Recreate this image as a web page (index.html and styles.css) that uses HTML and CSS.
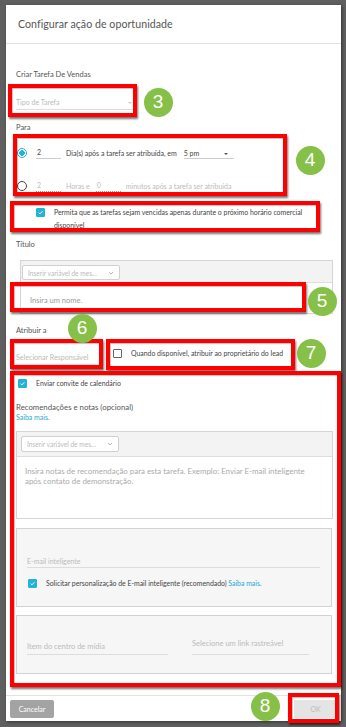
FILE: index.html
```html
<!DOCTYPE html>
<html lang="pt">
<head>
<meta charset="utf-8">
<title>Configurar ação de oportunidade</title>
<link rel="stylesheet" href="styles.css">
</head>
<body>
<div class="modal">
  <header class="modal-head"><h1 class="modal-title">Configurar ação de oportunidade</h1></header>
  <div class="modal-body">
    <div class="label l-criar">Criar Tarefa De Vendas</div>
    <div class="select s-tipo"><span class="ph">Tipo de Tarefa</span><span class="caret"></span></div>

    <div class="label l-para">Para</div>
    <div class="row row1">
      <span class="radio on"></span>
      <span class="num solid">2</span>
      <span class="txt">Dia(s) após a tarefa ser atribuída, em</span>
      <span class="select s-time"><span class="val">5 pm</span><span class="caret dark"></span></span>
    </div>
    <div class="row row2">
      <span class="radio"></span>
      <span class="num dotted">2</span>
      <span class="txt muted">Horas e</span>
      <span class="num dotted">0</span>
      <span class="txt muted">minutos após a tarefa ser atribuída</span>
    </div>
    <div class="chk-row permita">
      <span class="chk on"><svg viewBox="0 0 10 10"><path d="M2.3 5.2 4.2 7 7.8 3.2" fill="none" stroke="#fff" stroke-width="1.3"/></svg></span>
      <span class="chk-text">Permita que as tarefas sejam vencidas apenas durante o próximo horário comercial disponível</span>
    </div>

    <div class="label l-titulo">Título</div>
    <div class="rte rte-title">
      <div class="rte-bar"><span class="var-btn"><span>Inserir variável de mes...</span><svg viewBox="0 0 10 10"><path d="M2.5 3.8 5 6.3 7.5 3.8" fill="none" stroke="#999" stroke-width="0.9"/></svg></span></div>
      <div class="rte-area a-title">Insira um nome.</div>
    </div>

    <div class="label l-atrib">Atribuir a</div>
    <div class="assign">
      <div class="select s-resp"><span class="ph">Selecionar Responsável</span></div>
      <div class="chk-inline">
        <span class="chk"></span>
        <span class="chk-text">Quando disponível, atribuir ao proprietário do lead</span>
      </div>
    </div>

    <div class="chk-inline enviar">
      <span class="chk on"><svg viewBox="0 0 10 10"><path d="M2.3 5.2 4.2 7 7.8 3.2" fill="none" stroke="#fff" stroke-width="1.3"/></svg></span>
      <span class="chk-text">Enviar convite de calendário</span>
    </div>

    <div class="label l-rec">Recomendações e notas (opcional)</div>
    <a class="link saiba">Saiba mais.</a>
    <div class="rte rte-notes">
      <div class="rte-bar"><span class="var-btn"><span>Inserir variável de mes...</span><svg viewBox="0 0 10 10"><path d="M2.5 3.8 5 6.3 7.5 3.8" fill="none" stroke="#999" stroke-width="0.9"/></svg></span></div>
      <div class="rte-area a-notes">Insira notas de recomendação para esta tarefa. Exemplo: Enviar E-mail inteligente após contato de demonstração.</div>
    </div>

    <div class="panel p-email">
      <div class="line-field f-email"><span class="ph">E-mail inteligente</span></div>
      <div class="chk-inline pers">
        <span class="chk on"><svg viewBox="0 0 10 10"><path d="M2.3 5.2 4.2 7 7.8 3.2" fill="none" stroke="#fff" stroke-width="1.3"/></svg></span>
        <span class="chk-text">Solicitar personalização de E-mail inteligente (recomendado) <a class="link">Saiba mais.</a></span>
      </div>
    </div>

    <div class="panel p-media">
      <div class="line-field f-media"><span class="ph">Item do centro de mídia</span></div>
      <div class="line-field f-link"><span class="ph">Selecione um link rastreável</span></div>
    </div>
  </div>
  <footer class="modal-foot">
    <button class="btn btn-cancel">Cancelar</button>
    <button class="btn btn-ok">OK</button>
  </footer>
</div>

<div class="annot box b3"></div>
<div class="annot box b4"></div>
<div class="annot box bchk"></div>
<div class="annot box b5"></div>
<div class="annot box b6"></div>
<div class="annot box b7"></div>
<div class="annot box bbig"></div>
<div class="annot box b8"></div>

<div class="annot dot c3">3</div>
<div class="annot dot c4">4</div>
<div class="annot dot c5">5</div>
<div class="annot dot c6">6</div>
<div class="annot dot c7">7</div>
<div class="annot dot c8">8</div>
</body>
</html>
```

FILE: styles.css
```css
* { box-sizing: border-box; }
html, body { margin: 0; padding: 0; }
body {
  position: relative;
  width: 346px;
  height: 727px;
  overflow: hidden;
  background: #5f5f5f;
  font-family: Lato, "Open Sans", sans-serif;
  color: #555;
}

.modal {
  margin: 5px 0 0 6px;
  width: 335px;
  height: 716px;
  background: #fff;
  display: flex;
  flex-direction: column;
  box-shadow: 1px 1px 3px rgba(0,0,0,.45);
}

.modal-head {
  height: 39px;
  border-bottom: 1px solid #e2e2e2;
  display: flex;
  align-items: center;
  padding: 0 0 0 12px;
}
.modal-title {
  margin: 0;
  font-weight: 400;
  font-size: 10.6px;
  color: #555;
  letter-spacing: 0.05px;
}

.modal-body {
  flex: 1;
  padding: 0 8px 0 10px;
  display: flex;
  flex-direction: column;
  align-items: flex-start;
}

.label {
  font-size: 7.5px;
  line-height: 10px;
  height: 10px;
  color: #555;
}
.l-criar { margin-top: 26px; }
.l-para { margin-top: 13px; }
.l-titulo { margin-top: 8px; }
.l-atrib { margin-top: 12px; }
.l-rec { margin-top: 13px; font-size: 7.8px; }

.ph { color: #bbb; font-size: 7px; }

.select {
  display: flex;
  align-items: center;
  justify-content: space-between;
  border-bottom: 1px solid #ddd;
}
.s-tipo {
  margin-top: 15px;
  width: 118px;
  height: 15px;
}
.caret {
  width: 0; height: 0;
  border-left: 2px solid transparent;
  border-right: 2px solid transparent;
  border-top: 2px solid #ccc;
  margin-right: 2px;
  margin-top: 2px;
}
.caret.dark { border-top-color: #555; margin-right: 6px; }

.row {
  display: flex;
  align-items: center;
  height: 14px;
  width: 100%;
  font-size: 7px;
}
.row1 { margin-top: 13px; }
.row2 { margin-top: 19px; }

.radio {
  width: 10px; height: 10px;
  border-radius: 50%;
  border: 1px solid #444;
  margin-left: 1px;
  flex: none;
}
.radio.on {
  border-color: #22b3d7;
  background: radial-gradient(circle, #22b3d7 0 2.6px, #fff 3px);
}

.num {
  width: 25px;
  height: 12px;
  margin-left: 9px;
  padding-left: 1px;
  font-size: 7px;
  line-height: 11px;
  flex: none;
}
.num.solid { border-bottom: 1px solid #ccc; color: #444; }
.num.dotted { border-bottom: 1px dotted #999; color: #bbb; }
.txt { margin-left: 5px; color: #444; white-space: nowrap; }
.txt.muted { color: #bbb; }
.row2 .num + .txt + .num { margin-left: 6px; }

.s-time {
  margin-left: 7px;
  width: 50px;
  height: 12px;
  border-bottom-color: #ccc;
  color: #444;
  font-size: 7px;
}

.chk {
  width: 9px; height: 9px;
  flex: none;
  border: 1px solid #666;
  border-radius: 1px;
  background: #fff;
  display: flex;
}
.chk.on { background: #22b3d7; border-color: #22b3d7; }
.chk svg { width: 100%; height: 100%; }

.chk-row {
  display: flex;
  align-items: flex-start;
  margin-top: 13px;
  padding-left: 20px;
  width: 100%;
}
.chk-row .chk { margin-top: 2px; }
.chk-row .chk-text {
  margin-left: 9px;
  font-size: 6.9px;
  line-height: 13px;
  color: #444;
  width: 260px;
}

.rte {
  border: 1px solid #d5d5d5;
  display: flex;
  flex-direction: column;
}
.rte-title { margin-top: 10px; margin-left: 4px; width: 313px; }
.rte-notes { margin-top: 9px; width: 317px; }
.rte-bar {
  background: #f3f3f3;
  border-bottom: 1px solid #dedede;
  display: flex;
}
.rte-title .rte-bar { height: 22px; padding: 4px 0 0 1px; }
.rte-notes .rte-bar { height: 25px; padding: 4px 0 0 4px; }
.var-btn {
  display: flex;
  align-items: center;
  justify-content: space-between;
  width: 98px;
  height: 15px;
  border: 1px solid #d0d0d0;
  border-radius: 2px;
  background: #fff;
  padding: 0 4px 0 5px;
  font-size: 6.6px;
  color: #bbb;
}
.rte-notes .var-btn { height: 16px; }
.var-btn svg { width: 8px; height: 8px; }

.rte-area {
  background: #fff;
  font-size: 7.5px;
  color: #aaa;
}
.a-title { height: 30px; padding: 13px 0 0 9px; line-height: 10px; color: #999; }
.a-notes { height: 61px; padding: 9px 14px 0 8px; line-height: 10px; font-size: 7.9px; }

.assign {
  display: flex;
  align-items: flex-start;
  margin-top: 11px;
  height: 18px;
  width: 100%;
}
.s-resp {
  width: 84px;
  height: 18px;
  align-items: flex-end;
  border-bottom-color: #ddd;
}
.s-resp .ph { line-height: 12px; font-size: 7.1px; white-space: nowrap; color: #bbb; }

.chk-inline {
  display: flex;
  align-items: center;
  height: 12px;
}
.chk-inline .chk-text {
  font-size: 6.9px;
  color: #444;
  white-space: nowrap;
}
.assign .chk-inline { margin-left: 13px; }
.assign .chk-text { margin-left: 9px; }

.enviar { margin-top: 12px; margin-left: 2px; }
.enviar .chk-text { margin-left: 9px; }

.link { color: #22a9cf; text-decoration: none; }
.saiba { font-size: 7px; line-height: 10px; height: 10px; display: block; }

.panel {
  width: 316px;
  background: #f6f6f6;
  border: 1px solid #d2d2d2;
}
.p-email { margin-top: 9px; height: 79px; padding: 26px 11px 0 10px; }
.p-media {
  margin-top: 8px;
  height: 59px;
  padding: 21px 0 0 10px;
  display: flex;
  align-items: flex-start;
}

.line-field {
  border-bottom: 1px solid #ddd;
  display: flex;
}
.line-field .ph { font-size: 7px; line-height: 10px; color: #bbb; }
.p-media .line-field .ph { font-size: 7.5px; }
.f-email { height: 13px; padding-top: 1px; }
.pers { margin-top: 9px; margin-left: 1px; }
.pers .chk-text { margin-left: 9px; }

.f-media { width: 141px; height: 18px; padding-top: 5px; }
.f-link { width: 117px; height: 18px; padding-top: 2px; margin-left: 24px; }

.modal-foot {
  height: 26px;
  border-top: 1px solid #e2e2e2;
  display: flex;
  align-items: center;
  justify-content: space-between;
  padding: 1px 4px 0 4px;
}
.btn {
  border: none;
  border-radius: 2px;
  height: 18px;
  font-family: Lato, sans-serif;
  font-size: 7px;
  padding: 0;
}
.btn-cancel { width: 44px; background: #a3a3a3; color: #fff; }
.btn-ok { width: 43px; background: #e4e4e4; color: #bdbdbd; border-radius: 0; }

/* annotation overlays */
.annot { position: absolute; }
.box {
  border: 4px solid #ff0000;
  box-shadow: 1px 2px 2px rgba(0,0,0,.55), inset 1px 1px 1px rgba(0,0,0,.25);
}
.b3 { left: 8px; top: 84px; width: 129px; height: 33px; }
.b4 { left: 13px; top: 134px; width: 274px; height: 62px; }
.bchk { left: 10px; top: 201px; width: 310px; height: 31px; }
.b5 { left: 10px; top: 282px; width: 296px; height: 30px; }
.b6 { left: 10px; top: 339px; width: 93px; height: 30px; }
.b7 { left: 106px; top: 339px; width: 189px; height: 31px; }
.bbig { left: 10px; top: 371px; width: 331px; height: 316px; }
.b8 { left: 288px; top: 693px; width: 51px; height: 30px; }

.dot {
  width: 29px; height: 29px;
  border-radius: 50%;
  background: #86c048;
  color: #fff;
  font-family: "Liberation Sans", Arial, sans-serif;
  font-size: 19px;
  display: flex;
  align-items: center;
  justify-content: center;
}
.c3 { left: 143.5px; top: 87.5px; }
.c4 { left: 295.5px; top: 145.5px; }
.c5 { left: 307.5px; top: 286.5px; }
.c6 { left: 67.5px; top: 313.5px; }
.c7 { left: 296.5px; top: 338.5px; }
.c8 { left: 250.5px; top: 691.5px; }
```
